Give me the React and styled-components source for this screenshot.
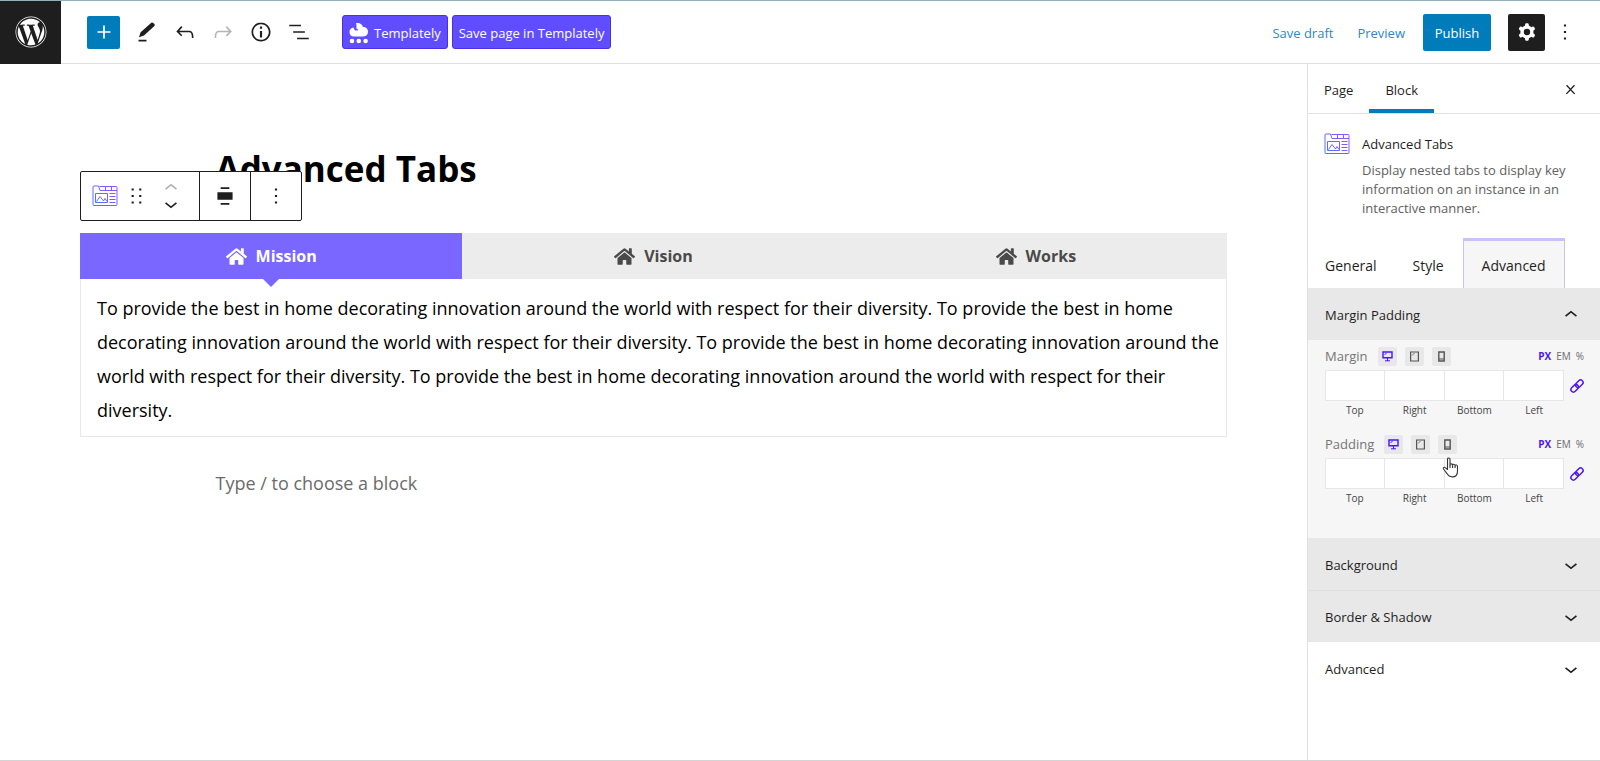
import React from "react";
import styled, { createGlobalStyle } from "styled-components";
import { FaWordpress, FaHome } from "react-icons/fa";

const Global = createGlobalStyle`
  *, *::before, *::after { box-sizing: border-box; }
  body { margin: 0; background: #fff; color: #1e1e1e; font: 13px/20px "Open Sans", "Noto Sans", sans-serif; }
  button, input { font: inherit; color: inherit; margin: 0; }
  button { background: none; border: 0; padding: 0; cursor: pointer; }
  h1, h2, p { margin: 0; }
  a { text-decoration: none; }
`;

const Page = styled.div`
  min-height: 100vh;
  display: flex;
  flex-direction: column;
  border-top: 1px solid #8fb0bc;
  border-bottom: 1px solid #d4d4d4;
`;

const Header = styled.header`
  display: flex;
  align-items: center;
  height: 63px;
  border-bottom: 1px solid #e0e0e0;
  padding-right: 22px;
`;

const Logo = styled.a`
  width: 61px;
  height: 63px;
  flex: none;
  background: #1e1e1e;
  color: #fff;
  display: grid;
  place-items: center;
`;

const Tools = styled.div`
  display: flex;
  align-items: center;
  gap: 12px;
  margin-left: 26px;
`;

const IconButton = styled.button`
  width: ${(p) => p.$size || 26}px;
  height: ${(p) => p.$size || 26}px;
  display: grid;
  place-items: center;
  border-radius: 2px;
  flex: none;
  color: ${(p) => p.$color || "#1e1e1e"};
  background: ${(p) => p.$bg || "transparent"};
`;

const AddButton = styled(IconButton)`
  margin-right: 2px;
`;

const Brand = styled.div`
  display: flex;
  gap: 4px;
  margin-left: 30px;
`;

const BrandButton = styled.button`
  height: 34px;
  padding: 2px 6px 0;
  display: flex;
  align-items: center;
  gap: 5px;
  background: #5f4dff;
  border: 1px solid #4a2fe6;
  border-radius: 3px;
  color: #fff;
  white-space: nowrap;
`;

const Actions = styled.div`
  display: flex;
  align-items: center;
  margin-left: auto;
`;

const TextButton = styled.button`
  color: #2f86c6;
  padding-top: 2px;
  margin-right: 24px;
`;

const Publish = styled.button`
  height: 37px;
  width: 68px;
  padding-top: 2px;
  margin: 0 17px 0 -6px;
  background: #007cba;
  color: #fff;
  border-radius: 2px;
`;

const SettingsButton = styled(IconButton)`
  margin-right: 7px;
`;

const Body = styled.div`
  flex: 1;
  display: flex;
`;

const Editor = styled.main`
  flex: 1;
  min-width: 0;
  padding: 81px 80px 0;
`;

const Column = styled.div`
  max-width: 876px;
  margin: 0 auto;
`;

const Title = styled.h1`
  font-size: 35px;
  line-height: 48px;
  color: #000;
`;

const Block = styled.section`
  position: relative;
  margin-top: 40px;
`;

const Toolbar = styled.div`
  position: absolute;
  left: 0;
  bottom: calc(100% + 12px);
  height: 50px;
  display: flex;
  background: #fff;
  border: 1px solid #1e1e1e;
  border-radius: 2px;
`;

const ToolGroup = styled.div`
  width: ${(p) => p.$width}px;
  display: flex;
  align-items: center;
  justify-content: center;
  gap: 6px;
  &:not(:first-child) { border-left: 1px solid #1e1e1e; }
`;

const Movers = styled.div`
  display: flex;
  flex-direction: column;
  margin: 0 5px 0 2px;
`;

const Mover = styled.button`
  width: 26px;
  height: 16px;
  display: flex;
  align-items: center;
  justify-content: center;
  color: ${(p) => (p.disabled ? "#b0b0b0" : "#1e1e1e")};
  & > svg { flex: none; }
`;

const TabRow = styled.div`
  display: grid;
  grid-template-columns: repeat(3, 1fr);
`;

const Tab = styled.button`
  position: relative;
  height: 46px;
  display: flex;
  align-items: center;
  justify-content: center;
  gap: 9px;
  font-size: 16px;
  font-weight: 700;
  color: ${(p) => (p.$active ? "#fff" : "#4a4a4a")};
  background: ${(p) => (p.$active ? "#7967ff" : "#ececec")};
  &::after {
    content: ${(p) => (p.$active ? '""' : "none")};
    position: absolute;
    top: 100%;
    left: calc(50% - 8px);
    border: 8px solid transparent;
    border-top-color: #7967ff;
    border-bottom: 0;
  }
`;

const TabPanel = styled.div`
  padding: 12px 2px 9px 16px;
  border: 1px solid #e8e8e8;
  border-top: 0;
  font-size: 18px;
  line-height: 34px;
  color: #000;
`;

const Placeholder = styled.p`
  margin-top: 33px;
  font-size: 18px;
  line-height: 26px;
  color: #6b6b6b;
`;

const Sidebar = styled.aside`
  width: 293px;
  flex: none;
  border-left: 1px solid #e0e0e0;
`;

const SideTabs = styled.div`
  display: flex;
  height: 50px;
  border-bottom: 1px solid #e0e0e0;
  padding-right: 17px;
`;

const SideTab = styled.button`
  padding: 6px 16px 0;
  border-bottom: 4px solid ${(p) => (p.$active ? "#007cba" : "transparent")};
`;

const CloseButton = styled(IconButton)`
  margin: 12px 0 0 auto;
`;

const Card = styled.div`
  display: flex;
  gap: 12px;
  padding: 19px 16px 20px;
  & > svg { flex: none; }
`;

const CardTitle = styled.h2`
  font-size: 13px;
  line-height: 22px;
  font-weight: 500;
  margin-bottom: 6px;
`;

const CardText = styled.p`
  line-height: 19px;
  color: #606060;
`;

const PanelTabs = styled.div`
  display: flex;
  height: 50px;
  gap: 2px;
`;

const PanelTab = styled.button`
  font-size: 14px;
  padding: 2px ${(p) => (p.$active ? 18 : 16)}px 0;
  border: 1px solid ${(p) => (p.$active ? "#c9c1fb" : "transparent")};
  border-top-width: 3px;
  border-bottom: 0;
  background: ${(p) => (p.$active ? "#f6f6f6" : "transparent")};
`;

const PanelHead = styled.button`
  width: 100%;
  height: 52px;
  padding: 0 16px 0 17px;
  display: flex;
  align-items: center;
  justify-content: space-between;
  background: ${(p) => (p.$plain ? "#fff" : "#e8e8e8")};
  border-top: 1px solid ${(p) => (p.$divided ? "#dedee3" : "transparent")};
`;

const PanelBody = styled.div`
  background: #f6f6f6;
  padding: 4px 16px 18px 17px;
`;

const Dimension = styled.fieldset`
  border: 0;
  margin: 0;
  padding: 0 0 12px;
  min-width: 0;
`;

const DimensionHead = styled.div`
  display: flex;
  align-items: center;
  height: 24px;
`;

const DimensionName = styled.span`
  color: #757575;
  margin-right: 10px;
`;

const Devices = styled.div`
  display: flex;
  gap: 8px;
`;

const Device = styled.button`
  width: 19px;
  height: 19px;
  display: grid;
  place-items: center;
  border-radius: 2px;
  background: #e8e8e8;
  color: ${(p) => (p.$active ? "#4a14f5" : "#555")};
`;

const Units = styled.div`
  display: flex;
  gap: 5px;
  margin-left: auto;
`;

const Unit = styled.button`
  font-size: 10px;
  color: ${(p) => (p.$active ? "#4a14f5" : "#6b6b6b")};
  font-weight: ${(p) => (p.$active ? 700 : 400)};
`;

const Sides = styled.div`
  display: grid;
  grid-template-columns: repeat(4, 1fr) 20px;
  padding-top: 2px;
`;

const Side = styled.label`
  display: flex;
  flex-direction: column;
  align-items: center;
  font-size: 10px;
  line-height: 19px;
  color: #444;
`;

const SideInput = styled.input`
  width: 100%;
  height: 31px;
  border: 1px solid #e6e6e6;
  border-left-width: ${(p) => (p.$first ? 1 : 0)}px;
  background: #fff;
  outline: 0;
`;

const LinkButton = styled(IconButton)`
  width: 14px;
  height: 31px;
  justify-self: end;
`;

const PointerLayer = styled.div`
  position: relative;
  height: 0;
`;

const Pointer = styled.svg`
  position: absolute;
  left: 117px;
  top: -51px;
  pointer-events: none;
`;

const paths = {
  plus: "M18 11.2h-5.2V6h-1.6v5.2H6v1.6h5.2V18h1.6v-5.2H18z",
  edit: "M4 17.2l1.6-5L16.3 2.8q.9-.8 1.9.1l1.2 1.2q.8.9 0 1.8L9 15.6zM3.500 19.800h8v1.600h-8z",
  undo: "M18.3 11.7c-.6-.6-1.4-.9-2.3-.9H6.7l2.9-3.3-1.1-1-4.5 5L8.5 16l1-1-2.7-2.7H16c.5 0 .9.2 1.3.5 1 1 1 3.4 1 4.5v.3h1.5v-.2c0-1.5 0-4.3-1.5-5.7z",
  redo: "M15.6 6.5l-1.1 1 2.9 3.3H8c-.9 0-1.7.3-2.3.9-1.4 1.5-1.4 4.2-1.4 5.6v.2h1.5v-.3c0-1.1 0-3.5 1-4.5.3-.3.7-.5 1.3-.5h9.2L14.5 15l1.1 1.1 4.6-4.6-4.6-5z",
  info: "M12 3.2c-4.8 0-8.8 3.9-8.8 8.8 0 4.8 3.9 8.8 8.8 8.8 4.8 0 8.8-3.9 8.8-8.8 0-4.8-4-8.8-8.8-8.8zm0 16c-4 0-7.2-3.3-7.2-7.2C4.8 8 8 4.8 12 4.8s7.2 3.3 7.2 7.2c0 4-3.2 7.2-7.2 7.2zM11 17h2v-6h-2v6zm0-8h2V7h-2v2z",
  list: "M13.8 5.2H3v1.5h10.8V5.2zm-3.6 12v1.5H21v-1.5H10.2zm7.2-6H6.6v1.5h10.8v-1.5z",
  cog: "M10.289 4.836A1 1 0 0111.275 4h1.306a1 1 0 01.987.836l.244 1.466c.787.26 1.503.679 2.108 1.218l1.393-.522a1 1 0 011.216.437l.653 1.13a1 1 0 01-.23 1.273l-1.148.944a6.025 6.025 0 010 2.435l1.149.946a1 1 0 01.23 1.272l-.653 1.13a1 1 0 01-1.216.437l-1.394-.522c-.605.54-1.32.958-2.108 1.218l-.244 1.466a1 1 0 01-.987.836h-1.306a1 1 0 01-.986-.836l-.244-1.466a5.995 5.995 0 01-2.108-1.218l-1.394.522a1 1 0 01-1.217-.436l-.653-1.131a1 1 0 01.23-1.272l1.149-.946a6.026 6.026 0 010-2.435l-1.148-.944a1 1 0 01-.23-1.272l.653-1.131a1 1 0 011.217-.437l1.393.522a5.994 5.994 0 012.108-1.218l.244-1.466zM14.929 12a3 3 0 11-6 0 3 3 0 016 0z",
  more: "M13 19h-2v-2h2v2zm0-6h-2v-2h2v2zm0-6h-2V5h2v2z",
  drag: "M7 5h2v2H7zM14 5h2v2h-2zM7 11h2v2H7zM14 11h2v2h-2zM7 17h2v2H7zM14 17h2v2h-2z",
  align: "M8 4h8v1.5H8zM5 8.5h14v7H5zM8 18.5h8V20H8z",
  up: "M6.5 12.4L12 8l5.5 4.4-.9 1.2L12 10l-4.5 3.6-1-1.2z",
  down: "M17.5 11.6L12 16l-5.5-4.4.9-1.2L12 14l4.5-3.6 1 1.2z",
  close: "M13.300 11.800l5.800-6-1.500-1.400-5.600 5.900-5.600-5.900-1.500 1.400 5.800 6-6.100 6.400 1.500 1.400 5.900-6.200 5.900 6.200 1.500-1.400z",
};

const Icon = ({ name, size = 26 }) => (
  <svg width={size} height={size} viewBox="0 0 24 24" fill="currentColor" fillRule="evenodd" aria-hidden="true">
    <path d={paths[name]} />
  </svg>
);

const TabsIcon = ({ id }) => (
  <svg width="26" height="22" viewBox="0 0 26 22" fill="none" stroke={`url(#${id})`} aria-hidden="true">
    <defs>
      <linearGradient id={id} gradientUnits="userSpaceOnUse" x1="0" y1="22" x2="26" y2="0">
        <stop offset="0" stopColor="#3f7bff" />
        <stop offset="1" stopColor="#a34bf5" />
      </linearGradient>
    </defs>
    <path d="M1 19.500V2q0-1 1-1H6.500l1.500 4.500H25V19.500q0 1-1 1H2q-1 0-1-1zM7.500 1.500h16.500q1 0 1 1v3M13.500 1.500v4M19.500 1.500v4" />
    <path d="M3.500 8.500h12v9h-12zM4.500 16.500l3.500-5 3.500 4.500 1.500-2.500 2 3M17.500 8.500h6M17.500 11.500h6M17.500 14.500h6M17.500 17.500h6" />
  </svg>
);

const CloudIcon = () => (
  <svg width="20" height="22" viewBox="0 0 20 22" fill="#fff" aria-hidden="true">
    <path d="M5 14.500C2 14.500.5 12.500.5 10S2 6 4.500 5.500C4.800 7.500 6 8.600 7.600 8.600 8.700 8.600 9.300 8 9.300 7.200c-1 .2-1.800-.3-1.900-1.300C7.300 4.500 8 3.500 7 1.200 10 .2 13.500 2 14 5c3 0 5 2 5 4.800s-2 4.700-4.500 4.700z" />
    <circle cx="3" cy="19" r="2.300" />
    <circle cx="9.800" cy="19" r="2.300" />
    <circle cx="16.600" cy="19" r="2.300" />
  </svg>
);

const DeviceIcon = ({ kind }) => (
  <svg width="11" height="11" viewBox="0 0 11 11" fill="none" stroke="currentColor" aria-hidden="true">
    {kind === "Desktop" && (
      <>
        <path strokeWidth="1.400" d="M1 1h9v5.800H1z" />
        <path d="M5.500 7v3M3 9.800h5M2.500 4l2-2" />
      </>
    )}
    {kind === "Tablet" && (
      <>
        <path strokeWidth="1.200" d="M1.600 1h7.800v9H1.600z" />
        <path strokeWidth=".8" d="M3 4.500l2.500-2.500" />
      </>
    )}
    {kind === "Mobile" && (
      <>
        <path strokeWidth="1.400" d="M2.800 1h5.400v9H2.800z" />
        <path d="M3 8h5" />
      </>
    )}
  </svg>
);

const LinkIcon = () => (
  <svg width="14" height="14" viewBox="0 0 14 14" fill="none" stroke="currentColor" strokeWidth="1.500" aria-hidden="true">
    <g transform="rotate(-45 7 7)">
      <rect x="-.5" y="4.500" width="8.500" height="5" rx="2.500" />
      <rect x="6" y="4.500" width="8.500" height="5" rx="2.500" />
    </g>
  </svg>
);

const HandPointer = () => (
  <Pointer width="17" height="21" viewBox="0 0 17 21" fill="#fff" stroke="#333" strokeWidth="1.100" strokeLinejoin="round" aria-hidden="true">
    <path d="M5.500 12.500V2.200C5.500.5 8 .5 8 2.200V8c0-1.500 2.600-1.500 2.600.3 0-1.500 2.500-1.300 2.500.5 0-1.300 2.400-1.200 2.400.6v4.500c0 3.500-2 6-5.200 6-3 0-4.300-1.500-5.300-3.300L1.500 12c-.8-1.500.9-2.400 2-1.200z" />
    <path d="M8 8v3M10.600 8.500v2.500M13.100 9v2" />
  </Pointer>
);

const SpacingControl = ({ name, children }) => (
  <Dimension aria-label={name}>
    <DimensionHead>
      <DimensionName>{name}</DimensionName>
      <Devices>
        {["Desktop", "Tablet", "Mobile"].map((kind) => (
          <Device key={kind} type="button" aria-label={kind} $active={kind === "Desktop"}>
            <DeviceIcon kind={kind} />
          </Device>
        ))}
      </Devices>
      <Units>
        {["PX", "EM", "%"].map((unit) => (
          <Unit key={unit} type="button" $active={unit === "PX"}>{unit}</Unit>
        ))}
      </Units>
    </DimensionHead>
    <Sides>
      {["Top", "Right", "Bottom", "Left"].map((side, i) => (
        <Side key={side}>
          <SideInput type="text" $first={i === 0} />
          {side}
        </Side>
      ))}
      <LinkButton type="button" aria-label="Link sides" $color="#4a14f5">
        <LinkIcon />
      </LinkButton>
    </Sides>
    {children}
  </Dimension>
);

export default function App() {
  return (
    <Page>
      <Global />
      <Header>
        <Logo href="#" aria-label="WordPress"><FaWordpress size={32} /></Logo>
        <Tools>
          <AddButton type="button" aria-label="Add block" $size={33} $bg="#007cba" $color="#fff"><Icon name="plus" /></AddButton>
          <IconButton type="button" aria-label="Tools"><Icon name="edit" size={24} /></IconButton>
          <IconButton type="button" aria-label="Undo"><Icon name="undo" /></IconButton>
          <IconButton type="button" aria-label="Redo" $color="#b5b5b5"><Icon name="redo" /></IconButton>
          <IconButton type="button" aria-label="Details"><Icon name="info" /></IconButton>
          <IconButton type="button" aria-label="List view"><Icon name="list" /></IconButton>
        </Tools>
        <Brand>
          <BrandButton type="button"><CloudIcon />Templately</BrandButton>
          <BrandButton type="button">Save page in Templately</BrandButton>
        </Brand>
        <Actions>
          <TextButton type="button">Save draft</TextButton>
          <TextButton type="button">Preview</TextButton>
          <Publish type="button">Publish</Publish>
          <SettingsButton type="button" aria-label="Settings" $size={37} $bg="#1e1e1e" $color="#fff"><Icon name="cog" /></SettingsButton>
          <IconButton type="button" aria-label="Options"><Icon name="more" /></IconButton>
        </Actions>
      </Header>
      <Body>
        <Editor>
          <Column><Title>Advanced Tabs</Title></Column>
          <Block>
            <Toolbar>
              <ToolGroup $width={118}>
                <IconButton type="button" aria-label="Advanced Tabs"><TabsIcon id="toolbarTabs" /></IconButton>
                <IconButton type="button" aria-label="Drag"><Icon name="drag" /></IconButton>
                <Movers>
                  <Mover type="button" aria-label="Move up" disabled><Icon name="up" /></Mover>
                  <Mover type="button" aria-label="Move down"><Icon name="down" /></Mover>
                </Movers>
              </ToolGroup>
              <ToolGroup $width={51}>
                <IconButton type="button" aria-label="Align"><Icon name="align" /></IconButton>
              </ToolGroup>
              <ToolGroup $width={51}>
                <IconButton type="button" aria-label="Options"><Icon name="more" /></IconButton>
              </ToolGroup>
            </Toolbar>
            <TabRow>
              {["Mission", "Vision", "Works"].map((name, i) => (
                <Tab key={name} type="button" $active={i === 0}><FaHome size={21} />{name}</Tab>
              ))}
            </TabRow>
            <TabPanel>
              To provide the best in home decorating innovation around the world with respect for their diversity. To
              provide the best in home decorating innovation around the world with respect for their diversity. To
              provide the best in home decorating innovation around the world with respect for their diversity. To
              provide the best in home decorating innovation around the world with respect for their diversity.
            </TabPanel>
          </Block>
          <Column><Placeholder>Type / to choose a block</Placeholder></Column>
        </Editor>
        <Sidebar>
          <SideTabs>
            <SideTab type="button">Page</SideTab>
            <SideTab type="button" $active>Block</SideTab>
            <CloseButton type="button" aria-label="Close settings"><Icon name="close" size={15} /></CloseButton>
          </SideTabs>
          <Card>
            <TabsIcon id="cardTabs" />
            <div>
              <CardTitle>Advanced Tabs</CardTitle>
              <CardText>Display nested tabs to display key information on an instance in an interactive manner.</CardText>
            </div>
          </Card>
          <PanelTabs>
            <PanelTab type="button">General</PanelTab>
            <PanelTab type="button">Style</PanelTab>
            <PanelTab type="button" $active>Advanced</PanelTab>
          </PanelTabs>
          <PanelHead type="button">Margin Padding<Icon name="up" /></PanelHead>
          <PanelBody>
            <SpacingControl name="Margin" />
            <SpacingControl name="Padding">
              <PointerLayer><HandPointer /></PointerLayer>
            </SpacingControl>
          </PanelBody>
          <PanelHead type="button">Background<Icon name="down" /></PanelHead>
          <PanelHead type="button" $divided>Border &amp; Shadow<Icon name="down" /></PanelHead>
          <PanelHead type="button" $plain>Advanced<Icon name="down" /></PanelHead>
        </Sidebar>
      </Body>
    </Page>
  );
}
